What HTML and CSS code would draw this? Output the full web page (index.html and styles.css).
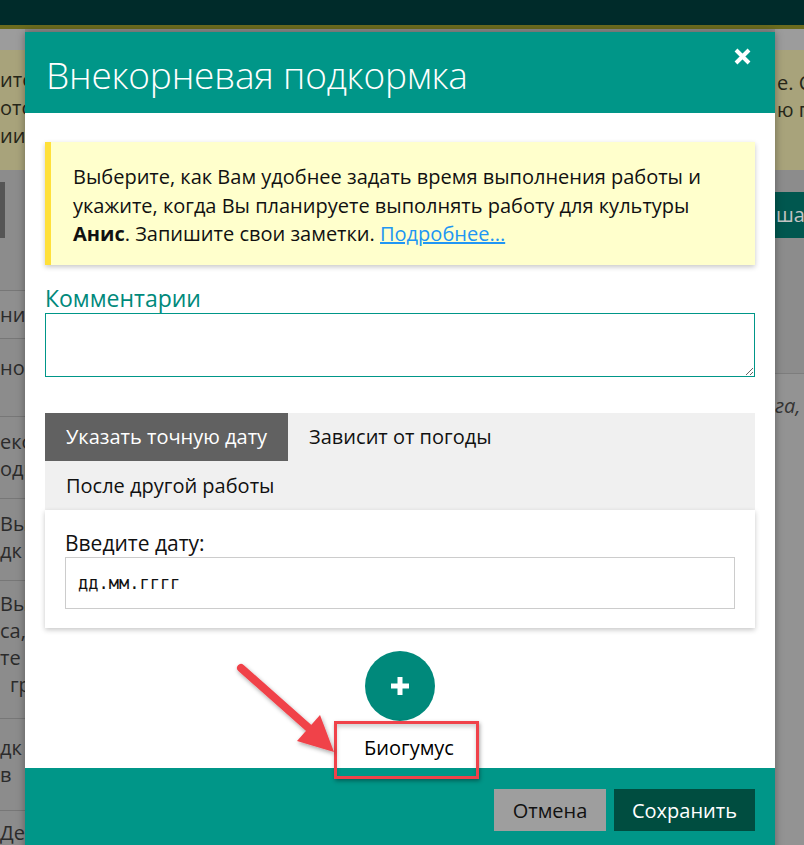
FILE: index.html
```html
<!DOCTYPE html>
<html lang="ru">
<head>
<meta charset="utf-8">
<title>Внекорневая подкормка</title>
<link rel="stylesheet" href="styles.css">
</head>
<body>
<div class="page">
  <header class="topbar"></header>
  <div class="page-body">
    <div class="side side-left">
      <div class="bg-gap"></div>
      <div class="bg-notice bg-notice-left">
        <div>ите</div>
        <div>ото</div>
        <div>ии</div>
      </div>
      <div class="bg-toolbar"><span class="bg-dark-btn"></span></div>
      <div class="bg-row bg-row-h"><div>ние</div></div>
      <div class="bg-row bg-row-1"><div>нои</div></div>
      <div class="bg-row bg-row-2"><div>еко</div><div>оди</div></div>
      <div class="bg-row bg-row-2"><div>Вы</div><div>дк</div></div>
      <div class="bg-row bg-row-4"><div>Вы</div><div>са,</div><div>те</div><div class="indent">гр</div></div>
      <div class="bg-row bg-row-3"><div>дк</div><div>в</div></div>
      <div class="bg-row bg-row-last"><div>Де</div></div>
    </div>
    <div class="center"></div>
    <div class="side side-right">
      <div class="bg-gap"></div>
      <div class="bg-notice bg-notice-right">
        <div>е. С</div>
        <div>ю п</div>
      </div>
      <div class="bg-toolbar-r"><span class="bg-teal-btn">шаб</span></div>
      <div class="bg-panel"><em>га, д</em></div>
    </div>
  </div>

  <div class="modal">
    <div class="modal-header">
      <h1 class="modal-title">Внекорневая подкормка</h1>
      <button class="close" aria-label="Закрыть">
        <svg width="19" height="19" viewBox="0 0 19 19"><path d="M3 3 L16 16 M16 3 L3 16" stroke="#fff" stroke-width="4" stroke-linecap="butt"/></svg>
      </button>
    </div>
    <div class="modal-body">
      <div class="note">
        Выберите, как Вам удобнее задать время выполнения работы и укажите, когда Вы планируете выполнять работу для культуры <b>Анис</b>. Запишите свои заметки. <a href="#">Подробнее...</a>
      </div>
      <label class="field-label">Комментарии</label>
      <textarea class="comments"></textarea>

      <div class="tabs">
        <div class="tab active">Указать точную дату</div>
        <div class="tab">Зависит от погоды</div>
        <div class="tab">После другой работы</div>
      </div>
      <div class="tab-panel">
        <div class="panel-label">Введите дату:</div>
        <div class="date-input">дд.мм.гггг</div>
      </div>

      <div class="add-wrap">
        <button class="add-btn" aria-label="Добавить">
          <svg width="20" height="20" viewBox="0 0 20 20"><path d="M10 1 V19 M1 10 H19" stroke="#fff" stroke-width="5"/></svg>
        </button>
        <div class="add-label">Биогумус</div>
      </div>
    </div>
    <div class="modal-footer">
      <button class="btn btn-cancel">Отмена</button>
      <button class="btn btn-save">Сохранить</button>
    </div>
  </div>

  <div class="annot-box"></div>
  <svg class="annot-arrow" width="804" height="845" viewBox="0 0 804 845">
    <defs>
      <filter id="sh" x="-20%" y="-20%" width="140%" height="140%">
        <feDropShadow dx="1" dy="2" stdDeviation="2" flood-color="#000" flood-opacity="0.35"/>
      </filter>
    </defs>
    <g filter="url(#sh)">
      <line x1="241" y1="668" x2="311" y2="730" stroke="#f0424a" stroke-width="8" stroke-linecap="round"/>
      <polygon points="334,752 297,741 320,715" fill="#f0424a"/>
    </g>
  </svg>
</div>
</body>
</html>
```

FILE: styles.css
```css
* { box-sizing: border-box; }
html, body { margin: 0; padding: 0; }
body {
  font-family: "Open Sans", "Noto Sans", sans-serif;
  background: #8c8c8c;
}
.page {
  position: relative;
  width: 804px;
  height: 845px;
  overflow: hidden;
}
.topbar {
  height: 29px;
  background: #002b2a;
  border-bottom: 4px solid #6b6b1e;
}
.page-body {
  display: grid;
  grid-template-columns: 25px 750px 29px;
  font-size: 20px;
  color: #2b2b2b;
}
.side { overflow: hidden; white-space: nowrap; }
.bg-gap { height: 21px; background: #9c9c9c; }
.bg-notice {
  height: 120px;
  background: #a8a37b;
  line-height: 28px;
  color: #262618;
}
.bg-notice-left { padding-top: 16px; }
.bg-notice-right { padding-top: 19px; padding-left: 2px; line-height: 27px; }
.bg-toolbar { height: 120px; padding-top: 12px; }
.bg-dark-btn { display: block; width: 5px; height: 56px; background: #555; }
.bg-row {
  border-top: 1px solid #777;
  display: flex;
  flex-direction: column;
  justify-content: center;
  line-height: 27px;
}
.bg-row-h { height: 48px; background: #8f8f8f; }
.bg-row-1 { height: 78px; padding-bottom: 20px; }
.bg-row-2 { height: 82px; padding-bottom: 6px; }
.bg-row-4 { height: 138px; padding-bottom: 12px; }
.bg-row-3 { height: 92px; padding-bottom: 8px; }
.bg-row-last { height: 60px; justify-content: flex-start; padding-top: 8px; }
.indent { padding-left: 10px; }
.bg-toolbar-r { height: 203px; padding-top: 22px; }
.bg-teal-btn {
  display: block;
  height: 46px;
  line-height: 46px;
  background: #00574f;
  color: #c4c4c4;
  padding-left: 1px;
}
.bg-panel {
  height: 480px;
  background: #939393;
  border-top: 1px solid #7d7d7d;
  padding-top: 18px;
  color: #333;
}

/* Modal */
.modal {
  position: absolute;
  top: 32px;
  left: 25px;
  width: 750px;
  background: #fff;
  box-shadow: 0 0 8px rgba(0,0,0,0.35);
}
.modal-header {
  height: 81px;
  background: #009688;
  display: flex;
  align-items: center;
  justify-content: space-between;
  padding: 0 23px 0 21px;
}
.modal-title {
  margin: 0;
  font-weight: 300;
  font-size: 37px;
  color: #fff;
  padding-top: 3px;
  letter-spacing: -0.2px;
}
.close {
  border: 0;
  background: none;
  padding: 0;
  align-self: flex-start;
  margin-top: 15px;
  line-height: 0;
}
.modal-body {
  padding: 29px 20px 0;
  height: 655px;
}
.note {
  background: #ffffcc;
  border-left: 6px solid #ffe03a;
  box-shadow: 0 2px 5px rgba(0,0,0,0.22);
  padding: 21px 22px 16px;
  font-size: 20px;
  line-height: 28.57px;
  color: #111;
}
.note b { font-weight: 700; }
.note a { color: #2196f3; }
.field-label {
  display: block;
  margin-top: 19px;
  color: #00897b;
  font-size: 23px;
  line-height: 29px;
}
.comments {
  display: block;
  width: 710px;
  height: 64px;
  border: 1px solid #009688;
  border-radius: 0;
  margin: 0;
  resize: vertical;
}
.tabs {
  margin-top: 36px;
  background: #f0f0f0;
  display: flex;
  flex-wrap: wrap;
  width: 710px;
}
.tab {
  height: 48px;
  line-height: 48px;
  padding: 0 21px;
  font-size: 20px;
  color: #111;
  white-space: nowrap;
}
.tab:nth-child(3) { height: 49px; line-height: 49px; }
.tab.active { background: #616161; color: #fff; }
.tab-panel {
  background: #fff;
  box-shadow: 0 2px 5px rgba(0,0,0,0.22);
  padding: 21px 20px 19px;
}
.panel-label {
  font-size: 21px;
  line-height: 24px;
  color: #111;
  margin-bottom: 2px;
}
.date-input {
  height: 52px;
  border: 1px solid #ccc;
  line-height: 50px;
  padding-left: 12px;
  font-family: "DejaVu Sans Mono", "Liberation Mono", monospace;
  font-size: 17px;
  color: #111;
}
.add-wrap {
  display: flex;
  flex-direction: column;
  align-items: center;
  margin-top: 23px;
}
.add-btn {
  width: 70px;
  height: 70px;
  border-radius: 50%;
  border: 0;
  background: #00897b;
  display: flex;
  align-items: center;
  justify-content: center;
  padding: 0;
}
.add-label {
  margin-top: 13px;
  font-size: 20px;
  color: #000;
  padding-left: 18px;
  line-height: 28px;
}
.modal-footer {
  height: 120px;
  background: #009688;
  display: flex;
  justify-content: flex-end;
  align-items: flex-start;
  gap: 8px;
  padding: 21px 20px 0;
}
.btn {
  height: 42px;
  border: 0;
  font-family: "Open Sans", sans-serif;
  font-size: 20px;
  padding: 0;
}
.btn-cancel { background: #9e9e9e; color: #111; width: 112px; }
.btn-save { background: #004d40; color: #fff; width: 141px; }

/* Annotation overlay */
.annot-box {
  position: absolute;
  left: 334px;
  top: 721px;
  width: 145px;
  height: 58px;
  border: 3px solid #f0424a;
  box-shadow: 1px 2px 4px rgba(0,0,0,0.35), inset 0 3px 4px rgba(0,0,0,0.18);
}
.annot-arrow {
  position: absolute;
  left: 0;
  top: 0;
  pointer-events: none;
}
```
